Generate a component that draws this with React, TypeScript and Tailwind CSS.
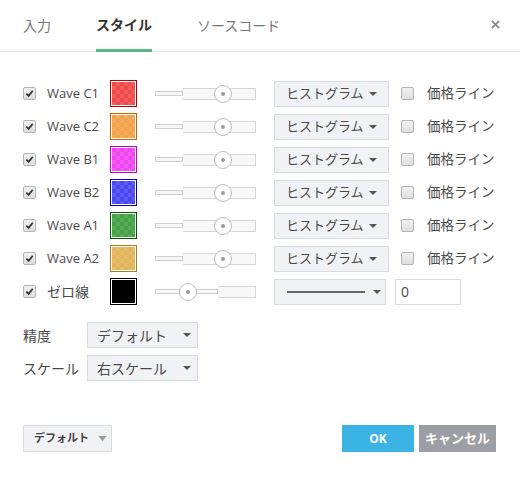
import type { ReactNode } from 'react'

const waves = [
  { label: 'Wave C1', fill: 'bg-[#f04a4a]', border: 'border-[#b00000]' },
  { label: 'Wave C2', fill: 'bg-[#f2a24a]', border: 'border-[#c86400]' },
  { label: 'Wave B1', fill: 'bg-[#f046f0]', border: 'border-[#c800c8]' },
  { label: 'Wave B2', fill: 'bg-[#4848f2]', border: 'border-[#0000b8]' },
  { label: 'Wave A1', fill: 'bg-[#43a043]', border: 'border-[#005a00]' },
  { label: 'Wave A2', fill: 'bg-[#e2b45a]', border: 'border-[#b07c20]' },
]

function Check({ checked, className = '' }: { checked?: boolean; className?: string }) {
  return (
    <span
      className={`flex items-center justify-center w-[13px] h-[13px] shrink-0 rounded-[2px] border border-[#b4b4b4] bg-[linear-gradient(#f2f2f2,#dedede)] ${className}`}
    >
      {checked && (
        <svg viewBox="0 0 10 10" className="w-[9px] h-[9px]">
          <path d="M1.5 5.2 L4 7.6 L8.6 2" fill="none" stroke="#333" strokeWidth="2" />
        </svg>
      )}
    </span>
  )
}

function Caret({ className = '' }: { className?: string }) {
  return (
    <svg viewBox="0 0 8 4" className={`w-[8px] h-[4px] shrink-0 ${className}`}>
      <path d="M0 0 H8 L4 4 Z" fill="currentColor" />
    </svg>
  )
}

function Swatch({ fill, border }: { fill: string; border: string }) {
  return (
    <span className={`block w-[27px] h-[27px] shrink-0 border ${border} p-px bg-white`}>
      <span
        className={`block w-full h-full ${fill} bg-[conic-gradient(rgba(255,255,255,0.1)_25%,transparent_0_50%,rgba(255,255,255,0.1)_0_75%,transparent_0)] bg-[length:8px_8px]`}
      />
    </span>
  )
}

function Slider({ thin, thumb, className = '' }: { thin: number; thumb: number; className?: string }) {
  return (
    <div className={`relative flex items-center w-[101px] h-[18px] shrink-0 ${className}`}>
      <span className="h-[5px] border border-[#d0d0d0] bg-[#f7f7f7]" style={{ width: thin }} />
      <span className="flex-1 h-[12px] border border-[#d6d6d6] border-l-0 bg-[#f8f8f8]" />
      <span
        className="absolute top-0 flex items-center justify-center w-[18px] h-[18px] rounded-full border border-[#b9bcc8] bg-white"
        style={{ left: thumb }}
      >
        <span className="w-[4px] h-[4px] rounded-full bg-[#9a9a9a]" />
      </span>
    </div>
  )
}

function Select({ children, className = '' }: { children: ReactNode; className?: string }) {
  return (
    <div
      className={`flex items-center justify-between h-[26px] shrink-0 border border-[#d9dbe0] bg-[#f1f2f6] text-[#4a4a4a] ${className}`}
    >
      {children}
    </div>
  )
}

export default function App() {
  return (
    <div className="w-[520px] h-[478px] bg-white text-[#4a4a4a] font-['Open_Sans','Noto_Sans_CJK_JP',sans-serif] flex flex-col">
      {/* Tabs */}
      <div className="flex items-stretch h-[52px] border-b border-[#e3e3e3] pl-[23px] pr-[20px]">
        <div className="flex items-center text-[14px] text-[#777]">入力</div>
        <div className="flex items-center ml-[45px] -mb-px border-b-[3px] border-[#5cb587] text-[14px] font-bold text-[#333]">
          スタイル
        </div>
        <div className="flex items-center ml-[45px] text-[14px] text-[#777]">ソースコード</div>
        <div className="ml-auto flex items-center pb-[3px]">
          <svg viewBox="0 0 10 10" className="w-[9px] h-[9px]">
            <path d="M1 1 L9 9 M9 1 L1 9" stroke="#8a8a8a" strokeWidth="2" />
          </svg>
        </div>
      </div>

      {/* Rows */}
      <div className="flex flex-col gap-[6px] pt-[28px] pl-[23px]">
        {waves.map((w) => (
          <div key={w.label} className="flex items-center h-[27px] text-[13px]">
            <Check checked />
            <span className="ml-[11px] w-[63px]">{w.label}</span>
            <Swatch fill={w.fill} border={w.border} />
            <Slider thin={28} thumb={59} className="ml-[18px]" />
            <Select className="ml-[18px] w-[115px] pl-[11px] pr-[11px]">
              <span>ヒストグラム</span>
              <Caret className="text-[#555]" />
            </Select>
            <Check className="ml-[12px]" />
            <span className="ml-[13px] text-[13.5px]">価格ライン</span>
          </div>
        ))}
        <div className="flex items-center h-[27px] text-[13px]">
          <Check checked />
          <span className="ml-[11px] w-[63px] text-[14px]">ゼロ線</span>
          <span className="block w-[27px] h-[27px] shrink-0 border border-black p-px bg-white">
            <span className="block w-full h-full bg-black" />
          </span>
          <Slider thin={63} thumb={24} className="ml-[18px]" />
          <Select className="ml-[18px] w-[112px] pl-[12px] pr-[3px]">
            <span className="block w-[78px] h-[2px] bg-[#666]" />
            <Caret className="text-[#555] mr-[1px]" />
          </Select>
          <div className="ml-[9px] w-[66px] h-[26px] border border-[#d9dbe0] bg-white flex items-center pl-[5px] text-[14px]">
            0
          </div>
        </div>
      </div>

      {/* Precision / scale */}
      <div className="flex flex-col gap-[7px] mt-[17px] pl-[23px] text-[14px]">
        <div className="flex items-center">
          <span className="w-[64px]">精度</span>
          <Select className="w-[111px] pl-[9px] pr-[6px]">
            <span>デフォルト</span>
            <Caret className="text-[#555]" />
          </Select>
        </div>
        <div className="flex items-center">
          <span className="w-[64px]">スケール</span>
          <Select className="w-[111px] pl-[9px] pr-[6px]">
            <span>右スケール</span>
            <Caret className="text-[#555]" />
          </Select>
        </div>
      </div>

      {/* Footer */}
      <div className="flex items-center mt-[44px] pl-[23px] pr-[24px]">
        <div className="flex items-center h-[27px] w-[89px] pl-[10px] border border-[#d9dbe0] bg-[#f1f2f6] text-[11px] font-bold text-[#444]">
          デフォルト
          <svg viewBox="0 0 10 6" className="ml-[9px] w-[9px] h-[5px]">
            <path d="M0 0 H10 L5 6 Z" fill="#9a9a9a" />
          </svg>
        </div>
        <button className="ml-auto h-[27px] w-[72px] bg-[#3bb3e4] text-white text-[12px] font-bold">OK</button>
        <button className="ml-[5px] h-[27px] w-[77px] bg-[#9c9ea6] text-white text-[13px] font-bold">キャンセル</button>
      </div>
    </div>
  )
}
